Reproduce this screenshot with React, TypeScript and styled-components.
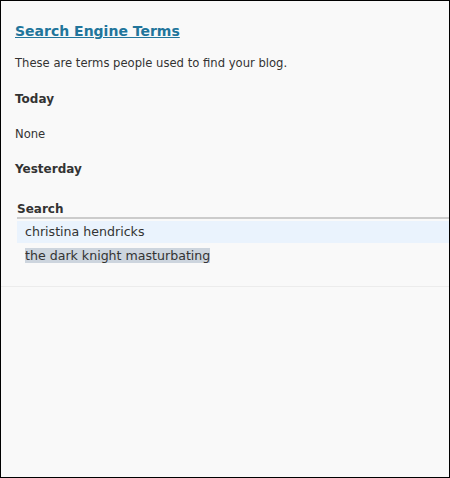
import React from "react";
import styled, { createGlobalStyle } from "styled-components";

const GlobalStyle = createGlobalStyle`
  html, body {
    margin: 0;
    padding: 0;
    background: #f9f9f9;
  }
`;

const Frame = styled.div`
  width: 450px;
  height: 478px;
  box-sizing: border-box;
  border: 1px solid #000;
  background: #f9f9f9;
  overflow: hidden;
  font-family: "DejaVu Sans", Verdana, sans-serif;
  color: #333333;
`;

const Content = styled.div`
  padding: 20px 0 0 14px;
`;

const Title = styled.h3`
  margin: 0;
  font-size: 14px;
  line-height: 20px;
  font-weight: bold;
`;

const TitleLink = styled.a`
  color: #21759b;
  text-decoration: underline;
`;

const Text = styled.p<{ $top: number }>`
  margin: ${(p) => p.$top}px 0 0;
  font-size: 11.6px;
  line-height: 16px;
`;

const SubHeading = styled.h4<{ $top: number }>`
  margin: ${(p) => p.$top}px 0 0;
  font-size: 12px;
  line-height: 16px;
  font-weight: bold;
`;

const Table = styled.table`
  margin: 22px 0 0 2px;
  width: calc(100% - 2px);
  border-collapse: separate;
  border-spacing: 0 2px;
  font-size: 12px;
`;

const HeadCell = styled.th`
  text-align: left;
  padding: 0;
  line-height: 16px;
  font-weight: bold;
  border-bottom: 2px solid #cccccc;
`;

const Row = styled.tr<{ $alt?: boolean }>`
  background: ${(p) => (p.$alt ? "#eaf3fd" : "transparent")};
`;

const Cell = styled.td`
  padding: 3px 8px;
  line-height: 16px;
  font-size: 12.6px;
`;

const Selected = styled.span`
  background: #cdd5de;
`;

const Divider = styled.hr`
  margin: 17px 0 0;
  border: 0;
  border-top: 1px solid #ececec;
`;

const terms = ["christina hendricks", "the dark knight masturbating"];

export default function App() {
  return (
    <>
      <GlobalStyle />
      <Frame>
        <Content>
          <Title>
            <TitleLink href="#">Search Engine Terms</TitleLink>
          </Title>
          <Text $top={14}>These are terms people used to find your blog.</Text>
          <SubHeading $top={20}>Today</SubHeading>
          <Text $top={19}>None</Text>
          <SubHeading $top={19}>Yesterday</SubHeading>
          <Table>
            <thead>
              <tr>
                <HeadCell>Search</HeadCell>
              </tr>
            </thead>
            <tbody>
              {terms.map((term, i) => (
                <Row key={term} $alt={i === 0}>
                  <Cell>{i === 1 ? <Selected>{term}</Selected> : term}</Cell>
                </Row>
              ))}
            </tbody>
          </Table>
        </Content>
        <Divider />
      </Frame>
    </>
  );
}
